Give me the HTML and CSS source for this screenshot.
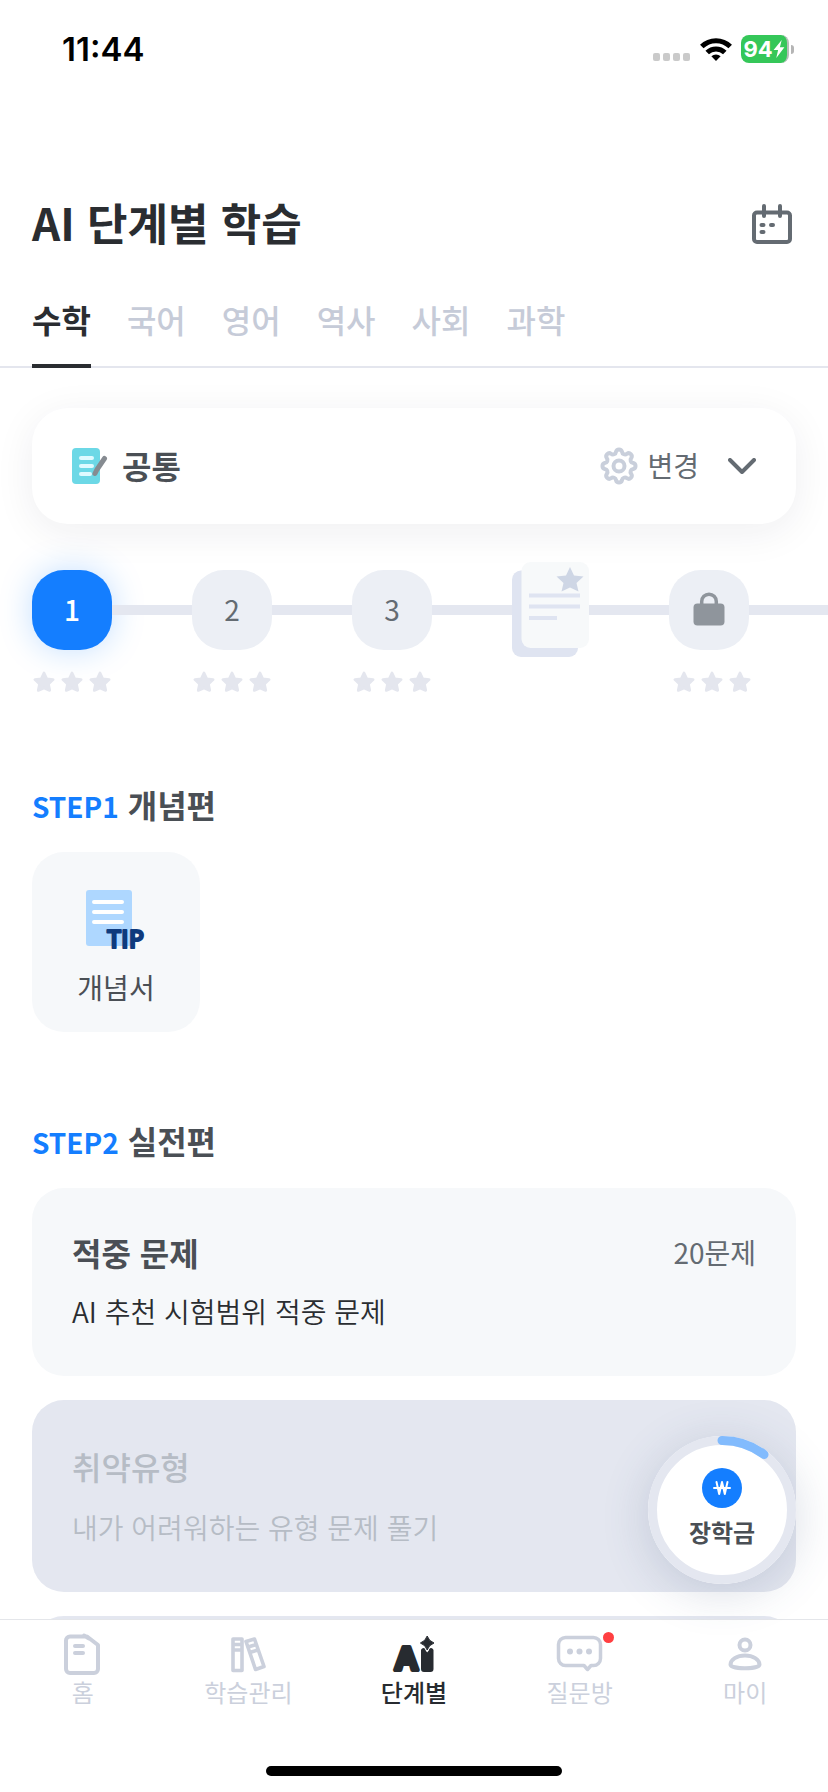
FILE: index.html
```html
<!DOCTYPE html>
<html lang="ko">
<head>
<meta charset="utf-8">
<meta name="viewport" content="width=device-width, initial-scale=1">
<title>AI 단계별 학습</title>
<link rel="stylesheet" href="styles.css">
</head>
<body>
<svg class="defs" aria-hidden="true">
  <symbol id="star" viewBox="0 0 24 24">
    <path d="M12 3l2.700 5.900 6.400.7-4.700 4.400 1.300 6.400L12 17.900l-5.700 2.500 1.300-6.400-4.700-4.400 6.400-.7z" fill="currentColor" stroke="currentColor" stroke-width="2.800" stroke-linejoin="round"/>
  </symbol>
</svg>
<div class="app">
  <div class="status">
    <span class="status-time">11:44</span>
    <div class="status-icons">
      <svg class="signal" viewBox="0 0 38 8" aria-hidden="true"><g fill="#cacaca"><rect width="7" height="8" rx="2"/><rect x="10" width="7" height="8" rx="2"/><rect x="20" width="7" height="8" rx="2"/><rect x="30" width="7" height="8" rx="2"/></g></svg>
      <svg class="wifi" viewBox="0 0 32 24" aria-hidden="true"><g fill="none" stroke="#000" stroke-width="5"><path d="M1.800 9.500a20.200 20.200 0 0 1 28.400 0"/><path d="M7.200 15.500a12.600 12.600 0 0 1 17.600 0"/></g><path d="M16 24l-4.600-4.700a6.600 6.600 0 0 1 9.200 0z"/></svg>
      <div class="battery"><span class="battery-body">94<svg viewBox="0 0 12 20" aria-hidden="true"><path d="M9 0L0 11h5L3 20l9-12H7z" fill="#fff"/></svg></span><span class="battery-tip"></span></div>
    </div>
  </div>

  <main class="content">
    <header class="header">
      <h1>AI 단계별 학습</h1>
      <button class="icon-button" aria-label="학습 캘린더">
        <svg viewBox="0 0 40 40" fill="none" stroke="#646b72" stroke-width="4" stroke-linecap="round"><rect x="2" y="8.500" width="36" height="29.500" rx="3"/><path d="M12 2v10M28 2v10"/><path d="M9.500 21h2M19 21h2M9.500 28h2"/></svg>
      </button>
    </header>
    <div class="tabs" role="tablist">
      <button class="tab tab-active" role="tab" aria-selected="true">수학</button>
      <button class="tab" role="tab">국어</button>
      <button class="tab" role="tab">영어</button>
      <button class="tab" role="tab">역사</button>
      <button class="tab" role="tab">사회</button>
      <button class="tab" role="tab">과학</button>
    </div>

    <button class="course">
      <svg class="course-icon" viewBox="0 0 36 36" aria-hidden="true"><rect width="28" height="36" rx="4" fill="#6cd8e6"/><path d="M9 10h11M9 18h11M9 26h9" stroke="#dffaff" stroke-width="4" stroke-linecap="round"/><path d="M32.500 10.500l-7.500 11-2 4" stroke="#868b91" stroke-width="5" stroke-linecap="round" fill="none"/></svg>
      <span class="course-name">공통</span>
      <svg class="gear" viewBox="0 0 40 40" aria-hidden="true"><g transform="translate(20 20)" fill="none" stroke="#c9cfdb" stroke-width="4"><path d="M14.200-3A3.100 3.100 0 0 1 14.200 3A3 3 0 0 0 12.200 7.900A3.100 3.100 0 0 1 7.900 12.200A3 3 0 0 0 3 14.200A3.100 3.100 0 0 1-3 14.200A3 3 0 0 0-7.900 12.200A3.100 3.100 0 0 1-12.200 7.900A3 3 0 0 0-14.200 3A3.100 3.100 0 0 1-14.200-3A3 3 0 0 0-12.200-7.900A3.100 3.100 0 0 1-7.900-12.200A3 3 0 0 0-3-14.200A3.100 3.100 0 0 1 3-14.200A3 3 0 0 0 7.900-12.200A3.100 3.100 0 0 1 12.200-7.900A3 3 0 0 0 14.200-3z"/><circle r="5.500"/></g></svg>
      <span class="course-change">변경</span>
      <svg class="chevron" viewBox="0 0 28 16" fill="none" stroke="#646b72" stroke-width="4" stroke-linecap="round" stroke-linejoin="round" aria-hidden="true"><path d="M2 2l12 12L26 2"/></svg>
    </button>

    <div class="steps">
      <button class="node node-active">1</button><span class="line"></span>
      <button class="node">2</button><span class="line"></span>
      <button class="node">3</button><span class="line"></span>
      <button class="paper" aria-label="단원 평가">
        <svg viewBox="0 0 77 96"><rect y="8.500" width="66" height="86.500" rx="9" fill="#dfe4f1"/><rect x="9.500" y="0" width="67.500" height="86" rx="9" fill="#f7f9fa"/><path d="M17 33.500h51M17 44.500h51M17 56h28" stroke="#dfe4f1" stroke-width="4"/><path d="M58 5l4 8.500 9.500 1-7 6.500 2 8.500-8.500-4-8.500 4 2-8.500-7-6.500 9.500-1z" fill="#ced6e5"/></svg>
      </button><span class="line"></span>
      <button class="node" aria-label="잠긴 단계"><svg class="lock" viewBox="0 0 32 34"><path d="M8.700 14V9.500a7.300 7.300 0 0 1 14.600 0V14" fill="none" stroke="#8f959c" stroke-width="3.500"/><rect x="0.500" y="11.500" width="31" height="22" rx="4" fill="#8f959c"/></svg></button><span class="line line-end"></span>
    </div>
    <div class="ratings" aria-hidden="true">
      <span class="stars"><svg><use href="#star"/></svg><svg><use href="#star"/></svg><svg><use href="#star"/></svg></span>
      <span class="stars"><svg><use href="#star"/></svg><svg><use href="#star"/></svg><svg><use href="#star"/></svg></span>
      <span class="stars"><svg><use href="#star"/></svg><svg><use href="#star"/></svg><svg><use href="#star"/></svg></span>
      <span class="stars"></span>
      <span class="stars"><svg><use href="#star"/></svg><svg><use href="#star"/></svg><svg><use href="#star"/></svg></span>
    </div>

    <section class="section">
      <h2><span class="step-label">STEP1</span> 개념편</h2>
      <button class="tip-card">
        <svg viewBox="0 0 60 60" aria-hidden="true"><rect width="46" height="56" rx="3" fill="#aed7ff"/><path d="M8 12h28M8 22h28M8 32h28" stroke="#fff" stroke-width="4" stroke-linecap="round"/><text class="tip-text" x="21" y="58">TIP</text></svg>
        <span>개념서</span>
      </button>
    </section>

    <section class="section">
      <h2><span class="step-label">STEP2</span> 실전편</h2>
      <div class="cards">
        <button class="card">
          <span class="card-head"><strong>적중 문제</strong><span class="count">20문제</span></span>
          <span class="card-desc">AI 추천 시험범위 적중 문제</span>
        </button>
        <button class="card card-locked" disabled>
          <span class="card-head"><strong>취약유형</strong></span>
          <span class="card-desc">내가 어려워하는 유형 문제 풀기</span>
        </button>
        <div class="card card-locked"></div>
      </div>
    </section>
  </main>

  <footer class="bottom">
    <button class="fab">
      <svg class="fab-ring" viewBox="0 0 148 148" fill="none" aria-hidden="true"><circle cx="74" cy="74" r="69.500" stroke="#e4e7f0" stroke-width="9"/><path d="M74 4.500a69.500 69.500 0 0 1 42 14" stroke="#82bbfd" stroke-width="9" stroke-linecap="round"/></svg>
      <svg class="coin" viewBox="0 0 40 40" aria-hidden="true"><circle cx="20" cy="20" r="20" fill="#147eff"/><path d="M14.500 14l2.700 12L20 14l2.800 12 2.700-12M12 20h16" fill="none" stroke="#fff" stroke-width="2" stroke-linecap="round" stroke-linejoin="round"/></svg>
      <span>장학금</span>
    </button>
    <nav class="nav">
      <a href="#home"><svg viewBox="0 0 48 44" fill="none" stroke="#cbd0dc" stroke-width="4" stroke-linejoin="round" stroke-linecap="round"><path d="M11 4.500h17l11 8.500v24a4 4 0 0 1-4 4H11a4 4 0 0 1-4-4v-28.500a4 4 0 0 1 4-4zM25 3.500l5 3"/><path d="M16 14h8M16 21h8"/></svg><span>홈</span></a>
      <a href="#manage"><svg viewBox="0 0 48 44" fill="none" stroke="#cbd0dc" stroke-width="3.600" stroke-linejoin="round"><path d="M9 7h9v31.500H9zM9 12.500h9M9 18h9"/><path d="M22 9.500l8.500-2.500 9.500 27.500-8.500 3zM24 15l8.500-2.500M25.500 20.500l8.500-2.500"/></svg><span>학습관리</span></a>
      <a href="#steps" class="nav-active" aria-current="page"><svg viewBox="0 0 48 44"><text class="ai-text" x="5" y="38">A</text><path d="M31 18a2.500 2.500 0 0 1 4-1.500l2.200 4 2.300-4a2.500 2.500 0 0 1 4 1.500v19a3 3 0 0 1-3 3h-6.500a3 3 0 0 1-3-3z" fill="#272b30"/><path d="M37.200 4q1.500 5 6.800 7-5.300 2-6.800 7-1.500-5-6.800-7 5.300-2 6.800-7z" fill="#272b30" stroke="#fff" stroke-width="3" stroke-linejoin="round"/><path d="M37.200 4q1.500 5 6.800 7-5.300 2-6.800 7-1.500-5-6.800-7 5.300-2 6.800-7z" fill="#272b30" stroke="#272b30" stroke-linejoin="round"/></svg><span>단계별</span></a>
      <a href="#questions"><svg viewBox="0 0 48 44" fill="none" stroke="#cbd0dc" stroke-width="3.500" stroke-linejoin="round"><path d="M9.500 5.500h28a7 7 0 0 1 7 7v14a7 7 0 0 1-7 7H35l-3.500 4-3.500-4h-18.500a7 7 0 0 1-7-7v-14a7 7 0 0 1 7-7z"/><g fill="#cbd0dc" stroke="none"><circle cx="14" cy="19.500" r="3"/><circle cx="23.500" cy="19.500" r="3"/><circle cx="33" cy="19.500" r="3"/></g></svg><i class="badge"></i><span>질문방</span></a>
      <a href="#my"><svg viewBox="0 0 48 44" fill="none" stroke="#cbd0dc" stroke-width="4"><circle cx="24" cy="13" r="5.500"/><path d="M9.500 32.500c0-5 6.500-9 14.500-9s14.500 4 14.500 9c0 5-29 5-29 0z"/></svg><span>마이</span></a>
    </nav>
    <div class="home-bar"></div>
  </footer>
</div>
</body>
</html>
```
FILE: styles.css
```css
* { box-sizing: border-box; }
body {
  margin: 0;
  background: #fff;
  color: #2a2d31;
  font-family: "Noto Sans CJK KR", "Noto Sans", sans-serif;
}
button {
  border: 0;
  margin: 0;
  padding: 0;
  background: none;
  color: inherit;
  font: inherit;
  text-align: left;
}
h1, h2 { margin: 0; }
svg { display: block; flex: none; }
.defs { position: absolute; width: 0; height: 0; }
.app { display: flex; flex-direction: column; height: 100vh; }

.status {
  display: flex;
  flex: none;
  justify-content: space-between;
  align-items: center;
  height: 98px;
  padding: 0 34px 0 62px;
  color: #000;
  font-family: Inter, sans-serif;
}
.status-time { font-size: 33px; font-weight: 600; }
.status-icons { display: flex; align-items: center; gap: 9px; }
.signal { width: 38px; height: 8px; margin-top: 16px; }
.wifi { width: 32px; height: 24px; }
.battery { display: flex; align-items: center; gap: 2px; }
.battery-body {
  display: flex;
  align-items: center;
  justify-content: center;
  width: 48px;
  height: 28px;
  border-right: 2px solid #b5bdb8;
  border-radius: 8px;
  background: #35c759;
  color: #fff;
  font-size: 22px;
  font-weight: 700;
}
.battery-body svg { width: 12px; height: 18px; }
.battery-tip { width: 3px; height: 9px; border-radius: 0 4px 4px 0; background: #b5b5b5; }

.content { flex: 1; min-height: 0; overflow-y: auto; scrollbar-width: none; }
.header {
  display: flex;
  justify-content: space-between;
  align-items: center;
  padding: 93px 36px 0 32px;
}
h1 { padding-bottom: 4px; font-size: 44px; line-height: 62px; font-weight: 700; }
.icon-button svg { width: 40px; height: 40px; }

.tabs {
  display: flex;
  gap: 36px;
  margin-top: 38px;
  padding: 0 32px;
  box-shadow: inset 0 -2px #e4e6ee;
}
.tab {
  padding-bottom: 21px;
  border-bottom: 4px solid transparent;
  color: #c6cbd8;
  font-size: 32px;
  line-height: 48px;
  font-weight: 500;
}
.tab-active { border-color: #2a2d31; color: #2a2d31; font-weight: 700; }

.course {
  display: flex;
  align-items: center;
  width: calc(100% - 64px);
  height: 116px;
  margin: 40px 32px 0;
  padding: 0 40px;
  border-radius: 36px;
  background: #fff;
  box-shadow: 0 8px 40px rgba(30, 35, 50, 0.07);
}
.course-icon { width: 36px; height: 36px; }
.course-name { flex: 1; margin-left: 14px; padding-bottom: 2px; color: #4a4f55; font-size: 32px; font-weight: 700; }
.gear { width: 40px; height: 40px; }
.course-change { margin: 0 29px 0 8px; padding-bottom: 2px; color: #646b72; font-size: 28px; font-weight: 400; }
.chevron { width: 28px; height: 16px; }

.steps { display: flex; align-items: center; margin-top: 38px; padding-left: 32px; }
.node {
  display: flex;
  flex: none;
  align-items: center;
  justify-content: center;
  width: 80px;
  height: 80px;
  padding-bottom: 2px;
  border-radius: 32px;
  background: #eceff5;
  color: #646b72;
  font-size: 28px;
  font-weight: 400;
}
.node-active { background: #147eff; color: #fff; font-weight: 500; box-shadow: 0 0 32px rgba(20, 126, 255, 0.25); }
.line { flex: none; width: 80px; height: 10px; background: #e4e7f0; }
.line-end { flex: 1; width: auto; }
.paper svg { width: 77px; height: 96px; }
.lock { width: 32px; height: 34px; }
.ratings { display: flex; gap: 80px; margin-top: 12px; padding: 0 0 2px 32px; color: #e4e6ee; }
.stars { display: flex; gap: 4px; width: 80px; }
.stars svg { width: 24px; height: 24px; }

.section { margin-top: 84px; padding: 0 32px; }
h2 { margin-bottom: 24px; color: #4a4f55; font-size: 32px; line-height: 48px; font-weight: 700; }
.step-label { color: #147eff; font-size: 28px; line-height: 28px; font-weight: 700; }
.tip-card {
  display: flex;
  flex-direction: column;
  align-items: center;
  gap: 16px;
  width: 168px;
  padding: 38px 0 24px;
  border-radius: 32px;
  background: #f6f8fa;
  color: #4a4f55;
  font-size: 28px;
  line-height: 42px;
}
.tip-card svg { width: 60px; height: 60px; overflow: visible; }
.tip-text {
  fill: #0f3a7d;
  stroke: #0f3a7d;
  stroke-width: 2px;
  stroke-linejoin: round;
  font-family: "Open Sans", sans-serif;
  font-size: 25px;
  font-weight: 600;
}

.cards { display: flex; flex-direction: column; gap: 24px; }
.card {
  display: flex;
  flex-direction: column;
  gap: 14px;
  min-height: 188px;
  padding: 40px 40px 44px;
  border-radius: 32px;
  background: #f6f8fa;
}
.card-head { display: flex; justify-content: space-between; color: #4a4f55; font-size: 32px; line-height: 48px; }
.count { color: #646b72; font-size: 28px; }
.card-desc { font-size: 28px; line-height: 42px; font-weight: 350; }
.card-locked { gap: 16px; padding: 42px 40px 44px; background: #e4e7f0; color: #b6bcc5; }
.card-locked .card-head { color: #b6bcc5; }
.card-locked strong { font-weight: 500; }

.bottom { position: relative; flex: none; border-top: 1px solid #e4e6ea; background: #fff; }
.fab {
  position: absolute;
  right: 32px;
  bottom: calc(100% + 36px);
  display: flex;
  flex-direction: column;
  align-items: center;
  width: 148px;
  height: 148px;
  padding-top: 32px;
  border-radius: 50%;
  background: #fff;
  color: #4a4f55;
  font-size: 24px;
  line-height: 36px;
  font-weight: 700;
  box-shadow: 0 8px 48px rgba(60, 80, 120, 0.2);
}
.fab-ring { position: absolute; inset: 0; width: 148px; height: 148px; }
.coin { width: 40px; height: 40px; margin-bottom: 6px; }
.nav { display: grid; grid-template-columns: repeat(5, 1fr); padding-top: 12px; }
.nav a {
  position: relative;
  display: flex;
  flex-direction: column;
  align-items: center;
  color: #cbd0dc;
  font-size: 24px;
  line-height: 32px;
  text-decoration: none;
}
.nav svg { width: 48px; height: 44px; overflow: visible; }
.nav .nav-active { color: #272b30; font-weight: 500; }
.ai-text {
  fill: #272b30;
  stroke: #272b30;
  stroke-width: 4px;
  stroke-linejoin: round;
  font-family: "Open Sans", sans-serif;
  font-size: 33px;
  font-weight: 700;
}
.badge { position: absolute; top: 0; left: calc(50% + 23px); width: 11px; height: 11px; border-radius: 50%; background: #ff3f41; }
.home-bar { width: 296px; height: 10px; margin: 58px auto 16px; border-radius: 5px; background: #000; }
```
